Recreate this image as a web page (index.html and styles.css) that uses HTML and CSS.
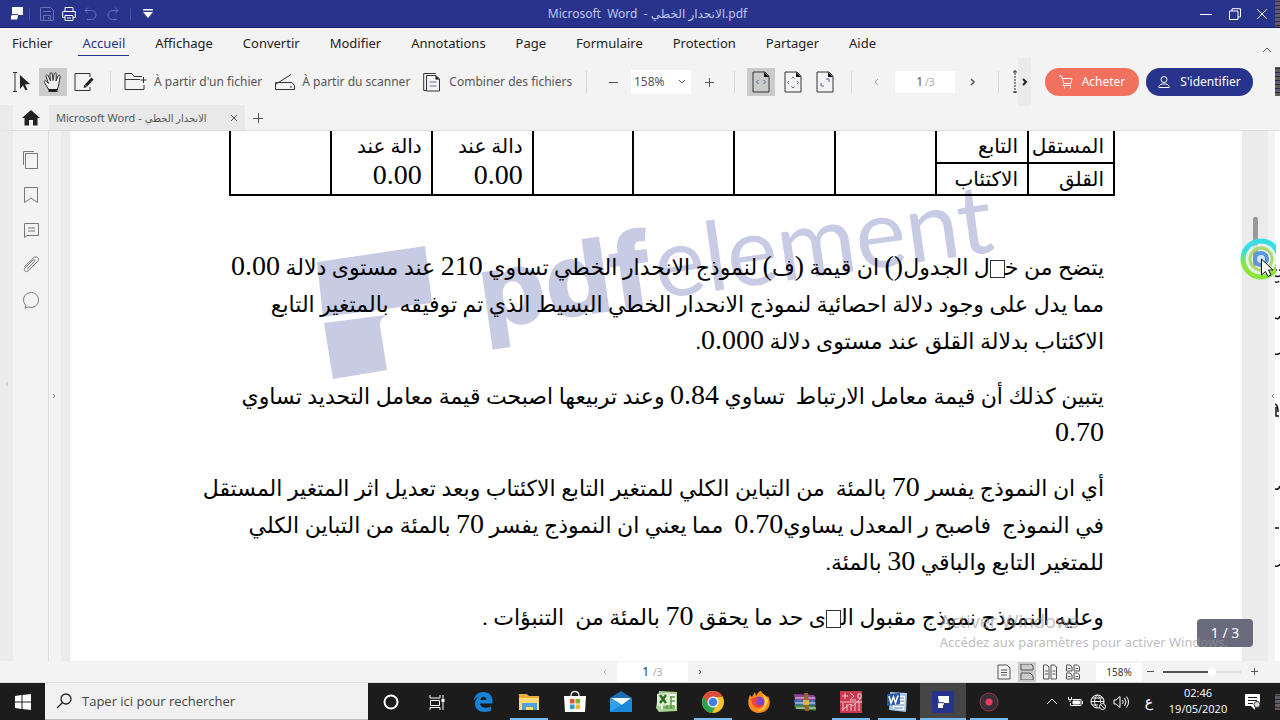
FILE: index.html
```html
<!DOCTYPE html>
<html lang="fr">
<head>
<meta charset="utf-8">
<meta name="viewport" content="width=device-width, initial-scale=1">
<title>Microsoft Word - الانحدار الخطي.pdf</title>
<link rel="stylesheet" href="styles.css">
</head>
<body>
<div class="desktop">
  <header class="titlebar">
    <div class="quick">
      <svg class="logo" width="12" height="14" viewBox="0 0 12 14"><path fill="#fff" d="M1 0h11v8H7v2.500a1 1 0 0 1-1 1v1H0V8.500h1z"/><path d="M1 7.600h6" stroke="#28348c"/></svg>
      <i class="tick"></i>
      <button aria-label="Enregistrer"><svg width="14" height="14" viewBox="0 0 14 14" class="dim"><path d="M.5.5h10l3 3v10H.5zM3 4.500h8M3.500 13V8.500h7V13M8.500 10v2"/></svg></button>
      <button aria-label="Imprimer"><svg width="14" height="14" viewBox="0 0 14 14" class="lit"><path d="M3 4V.5h8V4M3 10.500H.700v-6h12.600v6H11M3 8.500h8v5H3zM5 11h4"/></svg></button>
      <button aria-label="Annuler"><svg width="14" height="14" viewBox="0 0 14 14" class="dim"><path d="M4 .5 1 3.500l3 3M1 3.500h6.500a4.500 4.500 0 0 1 0 9H3"/></svg></button>
      <button aria-label="Rétablir"><svg width="14" height="14" viewBox="0 0 14 14" class="dim"><path d="m9 .5 3 3-3 3M12 3.500H6.500a4.500 4.500 0 0 0 0 9H11"/></svg></button>
      <i class="tick"></i>
      <button aria-label="Personnaliser"><svg width="12" height="10" viewBox="0 0 12 10"><path fill="#fff" d="M1 0h10v1.500H1zM1 3h10L6 9z"/></svg></button>
    </div>
    <h1 class="doc-name">Microsoft&nbsp; Word&nbsp; - الانحدار الخطي<bdi>.pdf</bdi></h1>
    <div class="window-buttons">
      <button aria-label="Réduire"><svg width="12" height="12" viewBox="0 0 12 12" class="lit"><path d="M0 6.500h12"/></svg></button>
      <button aria-label="Restaurer"><svg width="12" height="12" viewBox="0 0 12 12" class="lit"><path d="M.5 3h8.500v8.500H.5zM3 3V.700h8.500V9H9"/></svg></button>
      <button aria-label="Fermer"><svg width="12" height="12" viewBox="0 0 12 12" class="lit"><path d="m1 1 10 10M11 1 1 11"/></svg></button>
    </div>
    <i class="noise"></i>
  </header>

  <nav class="menu">
    <button>Fichier</button><button class="on">Accueil</button><button>Affichage</button><button>Convertir</button><button>Modifier</button><button>Annotations</button><button>Page</button><button>Formulaire</button><button>Protection</button><button>Partager</button><button>Aide</button>
    <button class="collapse" aria-label="Réduire le ruban"><svg width="10" height="6" viewBox="0 0 10 6"><path d="m1 5 4-4 4 4" class="grey"/></svg></button>
  </nav>

  <div class="toolbar">
    <div class="modes">
      <button aria-label="Sélectionner"><svg width="20" height="22" viewBox="0 0 20 22"><path class="ink" d="M1 1.500h4M1 20.500h4M3 2v18"/><path fill="#222" d="m8 4 10 9-5 .500 2.500 5-2 1-2.500-5L8 18z"/></svg></button>
      <button class="pressed" aria-label="Main"><svg width="20" height="22" viewBox="0 0 20 22"><path class="ink" fill="#eee" d="M6 19 1.500 11.500c-.8-1.500 1-2.500 2-1.300L5.500 12.500 3 5.500c-.5-1.700 1.500-2.300 2.200-.8L7.500 10 7 3c0-1.800 2-1.800 2.300 0L10 9.500 11.200 3c.4-1.700 2.300-1.300 2.100.3L13 10l2-5c.7-1.500 2.500-.8 2.100.800L15.500 15 14 19z"/><path fill="#222" d="M5.500 18h9v3h-9z"/></svg></button>
      <button aria-label="Modifier"><svg width="20" height="20" viewBox="0 0 20 20"><path class="ink" d="M16 5V1.500H1v17h15V15"/><path d="m18.500 6.500-6.500 7" stroke="#222" stroke-width="3"/><path fill="#222" d="m9.500 16 1-3.500 2.500 2.500z"/></svg></button>
    </div>
    <div class="create">
      <button><svg width="23" height="19" viewBox="0 0 23 19"><path class="ink" d="M18 4.500h-8L8 1.500H1v16h19V13M1 7.500h15M19.500 5v6M16.500 8h6"/></svg>À partir d'un fichier</button>
      <button><svg width="20" height="18" viewBox="0 0 20 18"><path class="ink" d="M1 11 16 1.500M1 9.500h16l2.500 3v4H.500V9.500M15 14h2"/></svg>À partir du scanner</button>
      <button class="wide"><svg width="18" height="20" viewBox="0 0 18 20"><path class="ink" d="M3.500 18.500H.700v-17h12M3.500 3.500h9.500l3.500 3.500v12h-13z"/><path d="M6.500 10h7M6.500 14h7" stroke="#6a719e"/><path fill="#111" d="M12.500 3.500v4h4z"/></svg>Combiner des fichiers</button>
    </div>
    <div class="zoom">
      <button aria-label="Zoom arrière"><svg width="10" height="10"><path class="grey" d="M1 5.500h9"/></svg></button>
      <span class="pick"><select aria-label="Zoom"><option>158%</option></select><svg width="8" height="6" viewBox="0 0 8 6"><path class="grey" d="m1 1 3 3 3-3"/></svg></span>
      <button aria-label="Zoom avant"><svg width="10" height="10"><path class="grey" d="M1 5.500h9M5.500 1v9"/></svg></button>
    </div>
    <div class="fits">
      <button class="pressed" aria-label="Pleine largeur"><svg width="18" height="22" viewBox="0 0 18 22"><path class="ink" d="M1 1h12l4 4v16H1z"/><path fill="#111" d="M12 1v5h5z"/><path class="violet" d="m6.500 9-2 2 2 2M11.500 9l2 2-2 2"/></svg></button>
      <button aria-label="Page entière"><svg width="18" height="22" viewBox="0 0 18 22"><path class="ink" d="M1 1h12l4 4v16H1z"/><path fill="#111" d="M12 1v5h5z"/><path class="violet" d="m5 10-1.500 1.500L5 13M13 10l1.500 1.500L13 13M7.500 7.500 9 6l1.500 1.500M7.500 15.500 9 17l1.500-1.500"/></svg></button>
      <button aria-label="Taille réelle"><svg width="18" height="22" viewBox="0 0 18 22"><path class="ink" d="M1 1h12l4 4v16H1z"/><path fill="#111" d="M12 1v5h5z"/><path class="violet" d="M10 8h3v3M5 12v3h3"/></svg></button>
    </div>
    <div class="pager">
      <button aria-label="Page précédente"><svg width="6" height="10" viewBox="0 0 6 10"><path class="pale" d="M5 2 2 5l3 3"/></svg></button>
      <label class="pageno"><input aria-label="Page" value="1"><span>/3</span></label>
      <button aria-label="Page suivante"><svg width="6" height="10" viewBox="0 0 6 10"><path class="grey" stroke-width="1.500" d="m1 2 3 3-3 3"/></svg></button>
    </div>
    <div class="overflow">
      <svg width="4" height="24" viewBox="0 0 4 24"><path d="M2 0v24" stroke="#222" stroke-width="1" stroke-dasharray="2 1"/><path d="M0 2h4M0 22h4" stroke="#222"/></svg>
      <button aria-label="Plus d'outils"><svg width="6" height="10" viewBox="0 0 6 10"><path d="m1 2 3 3-3 3" fill="none" stroke="#222" stroke-width="2"/></svg></button>
    </div>
    <button class="pill buy"><svg width="14" height="14" viewBox="0 0 14 14" class="lit"><path d="M0 1h2.500L5 8.500h7L13 3.500H3.500M5 8.500 4 10.500h8"/><path d="M5 12.500h1M11 12.500h1" stroke-width="1.500"/></svg>Acheter</button>
    <button class="pill login"><svg width="12" height="14" viewBox="0 0 12 14" class="lit"><circle cx="6" cy="4.500" r="3"/><path d="M.8 12.500c0-2 1.500-3.500 3.500-3.500h3.400c2 0 3.500 1.500 3.500 3.500z"/></svg>S'identifier</button>
    <i class="noise"></i>
  </div>

  <div class="tabs">
    <button class="home" aria-label="Accueil"><svg width="18" height="16" viewBox="0 0 18 16"><path fill="#222" d="m9 0 9 8h-2.500v7.500H11V10H7v5.500H2.500V8H0L5 3.500z"/></svg></button>
    <div class="tab"><span>Microsoft Word - <bdi>الانحدار الخطي</bdi></span><button aria-label="Fermer l'onglet"><svg width="8" height="8" viewBox="0 0 8 8"><path class="grey" d="m1 1 6 6M7 1 1 7"/></svg></button></div>
    <button class="add" aria-label="Nouvel onglet"><svg width="10" height="10"><path class="grey" d="M0 5.500h10M5.500 0v10"/></svg></button>
  </div>

  <main class="viewer">
    <aside class="edge"><svg width="4" height="6" viewBox="0 0 4 6"><path class="pale" d="M3 1 1 3l2 2"/></svg></aside>
    <nav class="rail">
      <button aria-label="Miniatures"><svg width="18" height="18" viewBox="0 0 18 18"><path class="mid" d="M3.500 2.500h12v15h-12zM1.500 14V.5H12"/></svg></button>
      <button aria-label="Signets"><svg width="18" height="18" viewBox="0 0 18 18"><path class="mid" d="M2.500 1.500h13v15L9 12l-6.500 4.500z"/></svg></button>
      <button aria-label="Commentaires"><svg width="18" height="18" viewBox="0 0 18 18"><path class="mid" d="M2.500 2.500h14v12H5l-2.500 2zM6 7h7M6 10h7"/></svg></button>
      <button aria-label="Pièces jointes"><svg width="18" height="18" viewBox="0 0 18 18"><path class="mid" d="m5 13 7.500-7.500c1-1-.5-2.500-1.500-1.500L3 12c-2 2 .8 5 3 3l9.500-9.500C18.500 2.500 14-1 11.500 2L2 11"/></svg></button>
      <button aria-label="Recherche"><svg width="18" height="18" viewBox="0 0 18 18"><path class="mid" d="M4 14.500a7.500 7.500 0 1 1 2.500 1.500L3 17z"/></svg></button>
    </nav>
    <div class="gutter"><svg width="4" height="6" viewBox="0 0 4 6"><path class="mid" d="m1 1 2 2-2 2"/></svg></div>

    <article class="page" lang="ar" dir="rtl">
      <svg class="brand" width="760" height="260" viewBox="300 150 760 260" direction="ltr" aria-label="pdfelement">
        <path d="m317 262 108-16 7 57-109 14zM324 323l62-8q-7 5-6 11l7 44-54 9z"/>
        <g transform="rotate(-8 486 329)"><text class="brand-bold" x="484" y="329">pdf</text><text class="brand-light" x="661" y="323">element</text></g>
      </svg>
      <table>
        <colgroup><col class="c1"><col class="c2"><col><col><col><col><col><col><col></colgroup>
        <tr><td>المستقل</td><td>التابع</td><td rowspan="2"></td><td rowspan="2"></td><td rowspan="2"></td><td rowspan="2"></td><td rowspan="2">دالة عند <b>0.00</b></td><td rowspan="2">دالة عند <b>0.00</b></td><td rowspan="2"></td></tr>
        <tr><td>القلق</td><td>الاكتئاب</td></tr>
      </table>
      <div class="prose">
        <p>يتضح من خ&zwj;<i class="box"></i>ل الجدول<b>()</b> ان قيمة <b>(</b>ف<b>)</b> لنموذج الانحدار الخطي تساوي <b>210</b> عند مستوى دلالة <b>0.00</b><br>مما يدل على وجود دلالة احصائية لنموذج الانحدار الخطي البسيط الذي تم توفيقه&nbsp; بالمتغير التابع<br>الاكئتاب بدلالة القلق عند مستوى دلالة <b>0.000</b>.</p>
        <p>يتبين كذلك أن قيمة معامل الارتباط&nbsp; تساوي <b>0.84</b> وعند تربيعها اصبحت قيمة معامل التحديد تساوي<br><b>0.70</b></p>
        <p>أي ان النموذج يفسر <b>70</b> بالمئة&nbsp; من التباين الكلي للمتغير التابع الاكئتاب وبعد تعديل اثر المتغير المستقل<br>في النموذج&nbsp; فاصبح ر المعدل يساوي<b>0.70</b>&nbsp; مما يعني ان النموذج يفسر <b>70</b> بالمئة من التباين الكلي<br>للمتغير التابع والباقي <b>30</b> بالمئة.</p>
        <p>وعليه النموذج نموذج مقبول ال&zwj;<i class="box"></i>ى حد ما يحقق <b>70</b> بالمئة من&nbsp; التنبؤات .</p>
      </div>
    </article>

    <div class="scroll"><i class="thumb"></i></div>
    <div class="handle"><svg width="4" height="6" viewBox="0 0 4 6"><path class="mid" d="M3 1 1 3l2 2"/></svg></div>
    <div class="sliver"><svg width="5" height="529" viewBox="0 0 5 529"><path fill="none" stroke="#111" stroke-width="1.500" d="M1 139h1M4 139h1M0 145q3 1 5 0M0 151q3 1 4-1M0 187q4 2 5-2M0 223q2 1 5-1M0 273q3 1 3 8M1 276v9h3M0 358q4 1 5-3M0 397h4M0 435q4 1 5-2"/></svg></div>

    <div class="counter">1 / 3</div>
    <div class="activate"><strong>Activer Windows</strong><span>Accédez aux paramètres pour activer Windows.</span></div>
    <svg class="click" width="36" height="44" viewBox="0 0 36 44">
      <defs><linearGradient id="ring" x2="0" y2="1"><stop offset=".25" stop-color="#38dde6"/><stop offset=".65" stop-color="#8be83a"/></linearGradient></defs>
      <g fill="none"><circle cx="21" cy="22" r="18" stroke="url(#ring)" stroke-width="5"/><circle cx="21" cy="22" r="13" stroke="#e4f3ea" stroke-width="4" opacity=".8"/><circle cx="21" cy="22" r="11" stroke="#a7dc6a" stroke-width="3"/><circle cx="21" cy="22" r="6" stroke="#5b97dc" stroke-width="4" fill="#d5e4f6"/></g>
      <path fill="#fff" stroke="#111" d="M21.500 22v16l4-3.500 2.500 5 3-1.500-2.500-5H33z"/>
    </svg>
  </main>

  <footer class="status">
    <div class="pager small">
      <button aria-label="Page précédente"><svg width="4" height="6" viewBox="0 0 4 6"><path class="pale" d="M3 1 1 3l2 2"/></svg></button>
      <label class="pageno"><input aria-label="Page courante" value="1"><span>/3</span></label>
      <button aria-label="Page suivante"><svg width="4" height="6" viewBox="0 0 4 6"><path class="grey" d="m1 1 2 2-2 2"/></svg></button>
    </div>
    <div class="views">
      <button aria-label="Une page"><svg width="14" height="16" viewBox="0 0 14 16"><path class="grey" d="M1 1h9l3 3v11H1zM4 6h6M4 8.500h6M4 11h6"/></svg></button>
      <button class="pressed" aria-label="Continu"><svg width="14" height="16" viewBox="0 0 14 16"><path class="grey" d="M1 0v6h12V2l-2-2H1M1 16V9h9l3 3v4z"/></svg></button>
      <button aria-label="Deux pages"><svg width="14" height="16" viewBox="0 0 14 16"><path class="grey" d="M.5 1H4l2 2v12H.5zM8 1h3.500l2 2v12H8zM2 7h3M2 10h3M9.500 7h3M9.500 10h3"/></svg></button>
      <button aria-label="Deux pages en continu"><svg width="14" height="16" viewBox="0 0 14 16"><path class="grey" d="M.5 1H4l2 2v4H.5zM8 1h3.500l2 2v4H8zM.5 9H4l2 2v4H.5zM8 9h3.500l2 2v4H8zM2 4.500h2.500M9.500 4.500H12M2 12.500h2.500M9.500 12.500H12"/></svg></button>
    </div>
    <output class="percent">158%</output>
    <button aria-label="Zoom arrière"><svg width="7" height="7"><path class="grey" d="M0 3.500h7"/></svg></button>
    <input class="slider" type="range" aria-label="Niveau de zoom" value="64">
    <button class="plus" aria-label="Zoom avant"><svg width="7" height="7"><path class="grey" d="M0 3.500h7M3.500 0v7"/></svg></button>
  </footer>

  <div class="taskbar">
    <button class="start" aria-label="Démarrer"><svg width="16" height="16" viewBox="0 0 16 16"><path fill="#fff" d="m0 2 6.500-1v6.500H0zM7.500 1 16 0v7.500H7.500zM0 8.500h6.500V15L0 14zM7.500 8.500H16V16l-8.500-1z"/></svg></button>
    <label class="search"><svg width="16" height="16" viewBox="0 0 16 16"><path fill="none" stroke="#222" stroke-width="1.300" d="m1 15 5.500-5.500"/><circle cx="10" cy="6" r="5" fill="none" stroke="#222" stroke-width="1.300"/></svg><input placeholder="Taper ici pour rechercher" aria-label="Taper ici pour rechercher"></label>
    <div class="apps">
      <button aria-label="Cortana"><svg viewBox="0 0 24 24"><circle cx="12" cy="12" r="6.500" fill="none" stroke="#fff" stroke-width="2"/></svg></button>
      <button aria-label="Vue des tâches"><svg viewBox="0 0 24 24"><path fill="none" stroke="#fff" d="M5 5v3h10V5M5.500 10.500h9v5h-9zM5 20v-2.500h10V20M18 5v15"/><path fill="#fff" d="M16.500 9h3v3h-3z"/></svg></button>
      <button aria-label="Edge"><svg viewBox="0 0 24 24"><path fill="#1683d8" d="M2.500 11C3.500 5 7.500 2 12.500 2 18.500 2 22 6 21.500 13.500H9c.5 4.500 7 5.500 11 3v4c-7 3.500-16.500.500-16-7 .1-3 1.700-5.500 4.500-7C5.500 7 3.500 9 2.500 11zm6.700-1h6.300c0-4.500-5.500-4.500-6.300 0z"/></svg></button>
      <button class="run" aria-label="Explorateur"><svg viewBox="0 0 24 24"><path fill="#e9ae35" d="M2 4h8l2 2h10v14H2z"/><path fill="#ffda75" d="M2 8h20v12H2z"/><path fill="#4da2dd" d="M5 20v-7h15v7h-4v-3h-7v3z"/></svg></button>
      <button aria-label="Store"><svg viewBox="0 0 24 24"><path d="M8 6c0-6 8-6 8 0" fill="none" stroke="#ddd" stroke-width="1.500"/><path fill="#fff" d="M1 6h22l-1 16H2z"/><path fill="#e2542c" d="M7 9h4.500v4.500H7z"/><path fill="#7ab532" d="M12.500 9H17v4.500h-4.500z"/><path fill="#2a9ce0" d="M7 14.500h4.500V19H7z"/><path fill="#f2b51d" d="M12.500 14.500H17V19h-4.500z"/></svg></button>
      <button aria-label="Courrier"><svg viewBox="0 0 24 24"><path fill="#1a6fb8" d="M1 8 12 1l11 7v14H1z"/><path fill="#f2fafe" d="M2 8h20l-9 7z"/><path fill="#33a1e5" d="m1 8 12 7-12 7z"/><path fill="#1d88d8" d="M23 8v14H1l12-7z"/></svg></button>
      <button aria-label="Excel"><svg viewBox="0 0 24 24"><path fill="#a9d297" d="m4 1 18 1v19l-18 1L1 18z"/><path fill="#fff" d="M6 4h15v15H6z"/><path d="M15 7h5M15 11h5M8 16h12M16 6v13M12 15v4M8 18h12" stroke="#5a9b43" stroke-width="1.500"/><path fill="#dcedd2" d="m2 4 13-1v12L2 16z"/><path d="m5 5 6 8m0-8-6 8" stroke="#2f6e24" stroke-width="2.500"/></svg></button>
      <button class="run" aria-label="Chrome"><svg viewBox="0 0 24 24"><circle cx="12" cy="12" r="11" fill="#f5c52c"/><path fill="#de4a3c" d="M2.500 6.500a11 11 0 0 1 19.300.500H12l-4.500 8z"/><path fill="#2ba24c" d="M2.500 6.500a11 11 0 0 0 8.500 16.500l5-9-8 1z"/><circle cx="12" cy="12" r="5.500" fill="#fff"/><circle cx="12" cy="12" r="4.300" fill="#3d7ee8"/></svg></button>
      <button aria-label="Firefox"><svg viewBox="0 0 24 24"><path fill="#ff8a1d" d="M3 5l2 2c1-2 2-3 3-5l1 4c2-4 4-5 5-5 1 3 5 4 6 6l1-1c5 9-1 17-9 17C2 23-1 13 3 5z"/><path fill="#ffd23c" d="M14 1c0 3 6 4 7 10-1 7-7 11-11 10 8-2 10-10 4-20z"/><circle cx="12" cy="12" r="5.500" fill="#7e45c9"/><path fill="#f0433c" d="M4 9c2-2 5-2 8 0-4 1-4 5 0 6 2 0 4 0 5-1-3 6-12 5-13-5z"/></svg></button>
      <button aria-label="WinRAR"><svg viewBox="0 0 24 24"><path fill="#8e4298" d="m1 4 20 1 2 3-1 3H2z"/><path fill="#406fb8" d="m1 10 21 .500 1 5L2 15z"/><path fill="#4a8a45" d="m1 15 21 .500 1 5L3 19z"/><path stroke="#ddd" d="M2 8h20M2 13h20M3 18h20"/><path fill="#9a6428" d="M11 3h4l1 18h-4z"/><path fill="#ddb24c" d="M10 10h6v5h-6z"/></svg></button>
      <button class="run" aria-label="SPSS"><svg viewBox="0 0 24 24"><path fill="#cb3950" d="M1 1h22v22H1z"/><path fill="none" stroke="#f4c4cb" d="M3 6h6M6 3v6M11 3l4 3-4 4h6M19 4h3v4h-3zM3 20l8-6 3 2 8-8M4 13v8M8 14v7M12 14v7M16 13v8M20 11v10M1 12h22"/></svg></button>
      <button class="run" aria-label="Word"><svg viewBox="0 0 24 24"><path fill="#a8c7e9" d="m5 2 17 1-1 19-17-2z"/><path fill="#fff" d="m9 5 11 1-1 14-11-1z"/><path d="M15 8h4M15 11h4M9 15h10M9 18h9" stroke="#5580b9"/><path fill="#2c5ba6" d="m2 4 13-1v11L2 16z"/><path d="m4 6 2 7 2.500-6 2 6L13 5.500" fill="none" stroke="#fff" stroke-width="1.500"/></svg></button>
      <button class="run front" aria-label="PDFelement"><svg viewBox="0 0 24 24"><rect x="1" y="1" width="22" height="22" rx="2" fill="#28348c"/><path fill="#fff" d="M7 6h11v7h-5v1.500l-1 .500v3H7v-5h1z"/><path d="M7 12.700h6" stroke="#28348c"/></svg></button>
      <button class="run" aria-label="Enregistreur"><svg viewBox="0 0 24 24"><circle cx="12" cy="12" r="9" fill="#333037" stroke="#a53243"/><circle cx="12" cy="12" r="3.500" fill="#f13a5c"/></svg></button>
    </div>
    <div class="tray">
      <button aria-label="Icônes cachées"><svg width="16" height="16" viewBox="0 0 16 16" class="lit"><path d="m3 10 5-5 5 5"/></svg></button>
      <button aria-label="Batterie"><svg width="16" height="16" viewBox="0 0 16 16" class="lit"><path d="M5.500 5.500H14v6H3.500V9M1.500 3v2.500h3V3M3 5.500V8M15.500 7v3"/><path fill="#fff" d="M6 7h6.500v3H6z"/></svg></button>
      <button aria-label="Réseau"><svg width="16" height="16" viewBox="0 0 16 16" class="lit"><circle cx="7.500" cy="7.500" r="6.500"/><path d="M1 7.500h13M2 4h11M2 11h6M7.500 1c-4 4-4 9 0 13M7.500 1c3 3 3.500 6 3 8"/><circle cx="12.500" cy="12.500" r="3" fill="#1c1c1c"/><path d="m10.500 10.500 4 4"/></svg></button>
      <button aria-label="Volume"><svg width="16" height="16" viewBox="0 0 16 16" class="lit"><path d="M1 6h2l4-3.500v11L3 10H1zM9.500 6q1.500 2 0 4M11.500 4q3 4 0 8M13.500 2.500q4 5.500 0 11"/></svg></button>
      <button class="lang" lang="ar">ع</button>
      <time class="clock" datetime="2020-05-19T02:46"><span>02:46</span><span>19/05/2020</span></time>
      <button class="notes" aria-label="Notifications"><svg width="16" height="18" viewBox="0 0 16 18"><path fill="#fff" d="M0 1h15v12h-5v4l-4-4H0z"/><path d="M3 4.500h9M3 7.500h9M3 10.500h5" stroke="#1c1c1c"/><circle cx="12" cy="11.500" r="3" fill="#ddd" stroke="#333"/></svg></button>
      <i class="noise"></i>
    </div>
  </div>
</div>
</body>
</html>
```
FILE: styles.css
```css
* { box-sizing: border-box; }
body { margin: 0; font-family: "Noto Sans", "DejaVu Sans", sans-serif; color: #222; background: #f3f3f3; }
button { display: inline-flex; align-items: center; justify-content: center; padding: 0; border: 0; background: none; color: inherit; font: inherit; white-space: nowrap; }
input, select { border: 0; padding: 0; font: inherit; color: inherit; min-width: 0; }
svg { display: block; flex: none; }

.desktop { display: grid; grid-template-rows: 28px 34px 43px 26px minmax(0, 1fr) 22px 37px; height: 100vh; overflow: hidden; }
.ink, .grey, .pale, .mid, .violet { fill: none; stroke: #333; }
.ink[fill] { fill: #eee; }
.grey { stroke: #555; }
.pale { stroke: #aaa; }
.mid { stroke: #777; }
.violet { stroke: #5b6298; }
.lit { fill: none; stroke: #fff; }
.dim { fill: none; stroke: #6872b4; }
.noise { width: 5px; align-self: stretch; background: repeating-linear-gradient(#54634f 0 1px, #302b49 1px 2px, #685864 2px 4px); }
.pressed { background: #cbcbcb; }

/* Title bar */
.titlebar { display: grid; grid-template-columns: 1fr auto 1fr 5px; align-items: center; background: #28348c; border-bottom: 1px solid #151d66; }
.quick { display: flex; align-items: center; padding-left: 11px; }
.quick button { width: 22px; height: 27px; }
.tick { width: 1px; height: 12px; margin: 0 6px; background: #4953a0; }
.doc-name { margin: 0 0 0 20px; font-size: 12px; font-weight: 400; line-height: 24px; color: #bfc5f0; white-space: nowrap; }
.window-buttons { display: flex; justify-content: flex-end; }
.window-buttons button { width: 29px; height: 27px; }
.window-buttons button:last-child { width: 26px; }

/* Menu */
.menu { display: flex; align-items: flex-start; padding: 2px 8px 0 12px; gap: 30px; }
.menu button { height: 25px; font-size: 13px; font-weight: 400; }
.menu .on { color: #28348c; padding: 0 4px; margin: 0 -4px; box-shadow: 0 1px 0 #28348c; }
.menu .collapse { margin: 7px 0 0 auto; }

/* Tools */
.toolbar { display: flex; align-items: center; height: 39px; font-size: 12px; color: #555; }
.toolbar > div { display: flex; align-items: center; height: 28px; flex: none; }
.toolbar > .create, .toolbar > .zoom, .toolbar > .fits, .toolbar > .pager { border-right: 1px solid #d8d8d8; height: 22px; }
.modes { width: 110px; padding-left: 8px; gap: 3px; }
.modes button { width: 28px; height: 28px; }
.create { width: 477px; padding-left: 13px; gap: 13px; border-left: 1px solid #d8d8d8; }
.create button { gap: 7px; }
.create .wide { gap: 8px; }
.zoom { width: 148px; padding-left: 16px; }
.zoom button { width: 20px; height: 22px; }
.pick { display: flex; align-items: center; position: relative; margin: 0 8px; }
.pick select { width: 60px; height: 24px; padding-left: 3px; background: #fff; appearance: none; }
.pick svg { position: absolute; right: 5px; pointer-events: none; }
.fits { width: 117px; padding-left: 12px; gap: 4px; }
.fits button { width: 28px; height: 28px; }
.pager { width: 147px; padding-left: 14px; }
.pager button { width: 20px; height: 20px; }
.pageno { display: flex; align-items: baseline; width: 60px; height: 22px; margin: 0 8px 0 9px; background: #fff; line-height: 22px; }
.pageno input { width: 28px; height: 22px; text-align: right; background: none; }
.pageno span { padding-left: 2px; font-size: 10px; color: #aaa; }
.toolbar > .overflow { width: 46px; height: 48px; gap: 1px; padding-left: 14px; }
.overflow button { width: 13px; height: 48px; background: #ebebeb; }
.pill { flex: none; height: 28px; border-radius: 14px; color: #fff; font-size: 12px; gap: 9px; }
.buy { width: 94px; background: #f2705e; margin-right: 7px; }
.login { width: 107px; background: #28348c; gap: 10px; margin-right: auto; }
.toolbar .noise { height: 29px; align-self: center; }

/* Document tabs */
.tabs { display: flex; align-items: stretch; border-bottom: 1px solid #ddd; border-left: 13px solid #ebebeb; font-size: 11px; color: #555; }
.home { width: 36px; }
.tab { display: flex; align-items: center; justify-content: space-between; width: 196px; padding: 0 7px; background: #e9e9e9; white-space: nowrap; }
.tab bdi { font-size: 10px; }
.add { width: 25px; }

/* Viewer */
.viewer { position: relative; display: flex; min-height: 0; overflow: hidden; }
.edge { display: flex; align-items: center; justify-content: center; flex: 0 0 13px; padding-bottom: 24px; background: #ebebeb; }
.rail { display: flex; flex-direction: column; align-items: center; flex: 0 0 36px; gap: 13px; padding-top: 18px; border-right: 1px solid #ddd; }
.rail button { width: 22px; height: 22px; }
.gutter { display: flex; align-items: center; flex: 0 0 21px; padding-left: 3px; border-right: 9px solid #ebebeb; }
.page { position: relative; flex: 1; min-width: 0; padding: 0 127px 0 159px; overflow: hidden; background: #fff; color: #000; font-family: "Liberation Serif", "DejaVu Sans", serif; font-size: 22px; }
.page table { position: relative; width: 100%; table-layout: fixed; border-collapse: collapse; font-size: 20px; line-height: 30px; }
.page td { height: 32px; padding: 0 9px; border: 2px solid #000; border-top-width: 0; vertical-align: top; white-space: nowrap; }
.page td[rowspan] { white-space: normal; }
.c1 { width: 86px; }
.c2 { width: 92px; }
.page b { font-size: 28px; font-weight: 400; line-height: 1; }
.prose { position: relative; padding: 53px 11px 0 0; line-height: 37px; white-space: nowrap; }
.prose p { margin: 0 0 18px; }
.box { display: inline-block; width: 15px; height: 18px; border: 1px solid #333; vertical-align: -3px; }
.brand { position: absolute; left: 230px; top: 19px; fill: #c8cbe4; overflow: visible; }
.brand-bold { font: 800 104px Inter, sans-serif; }
.brand-light { font: 400 96px Lato, sans-serif; }
.scroll { flex: 0 0 26px; padding: 86px 0 0 11px; background: #ebebeb; }
.thumb { display: block; width: 5px; height: 49px; border-radius: 2px; background: #999; }
.handle { display: flex; align-items: center; justify-content: flex-end; flex: 0 0 7px; }
.sliver { flex: 0 0 5px; overflow: hidden; background: #fff; }
.counter { position: absolute; right: 27px; bottom: 14px; width: 56px; border-radius: 4px; background: #696b7c; color: #fff; font-size: 14px; line-height: 28px; text-align: center; }
.activate { position: absolute; right: 52px; bottom: 9px; display: grid; color: rgba(150, 150, 150, .65); font-size: 13px; line-height: 20px; white-space: nowrap; }
.activate strong { font-family: "Open Sans", sans-serif; font-size: 18px; font-weight: 400; line-height: 22px; }
.click { position: absolute; right: 4px; top: 106px; }

/* Status bar */
.status { display: flex; align-items: center; padding-right: 22px; border-bottom: 1px solid #ddd; color: #333; font-size: 11px; }
.pager.small { display: flex; align-items: center; width: auto; margin: 0 auto; padding-left: 310px; }
.small .pageno { width: 71px; height: 20px; margin: 0 2px; line-height: 20px; }
.small .pageno input { width: 32px; height: 20px; font-size: 12px; }
.small .pageno span { padding-left: 4px; }
.views { display: flex; gap: 5px; }
.views button { width: 18px; height: 20px; }
.percent { width: 46px; margin: 0 5px 0 14px; background: #fff; font-size: 10px; line-height: 18px; text-align: center; }
.slider { width: 78px; height: 12px; margin: 0 10px 0 9px; appearance: none; background: linear-gradient(90deg, #555 64%, #ddd 64%) center / 100% 2px no-repeat; }
.slider::-webkit-slider-thumb { appearance: none; width: 8px; height: 8px; border-radius: 50%; background: #fff; }

/* Taskbar */
.taskbar { display: flex; background: #1c1c1c; color: #fff; font-family: "Open Sans", "DejaVu Sans", sans-serif; }
.start { width: 45px; }
.search { display: flex; align-items: center; gap: 10px; flex: 0 0 323px; padding-left: 11px; border-bottom: 1px solid #bbb; background: #f1f1f1; }
.search input { flex: 1; background: none; font-size: 13px; }
.search input::placeholder { color: #444; opacity: 1; }
.apps { display: flex; }
.apps button { width: 46px; }
.apps svg { width: 24px; height: 24px; }
.run { background: linear-gradient(#76b9ed, #76b9ed) bottom / 38px 2px no-repeat; }
.front { background: linear-gradient(#76b9ed, #76b9ed) bottom / 46px 2px no-repeat #454545; }
.tray { display: flex; align-items: center; margin-left: auto; }
.tray button { width: 23px; height: 37px; }
.tray .lang { width: 34px; font-size: 14px; }
.clock { display: grid; width: 64px; padding-bottom: 2px; font-size: 11px; line-height: 16px; text-align: center; }
.tray .notes { width: 45px; }
.tray .noise { height: 16px; align-self: center; }
```
